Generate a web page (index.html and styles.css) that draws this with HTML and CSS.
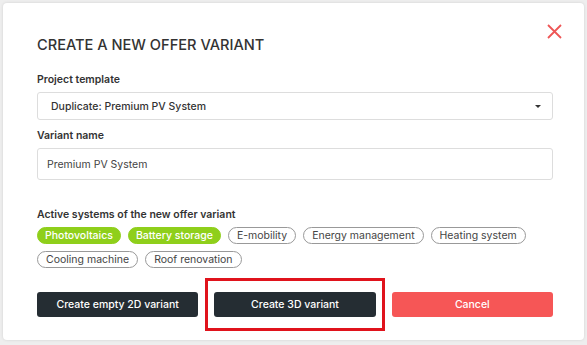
FILE: index.html
```html
<!DOCTYPE html>
<html lang="en">
<head>
    <meta charset="UTF-8">
    <meta name="viewport" content="width=device-width, initial-scale=1.0">
    <title>Create offer variant</title>
    <link rel="stylesheet" href="styles.css">
</head>
<body>
    <div class="modal">
        <button type="button" class="close" aria-label="Close">
            <svg width="15" height="15" viewBox="0 0 15 15">
                <path d="M1 1 L14 14 M14 1 L1 14" stroke="#ee5656" stroke-width="1.8" fill="none"/>
            </svg>
        </button>

        <h2>CREATE A NEW OFFER VARIANT</h2>

        <!-- Template -->
        <label class="field-label">Project template</label>
        <div class="select">
            <span>Duplicate: Premium PV System</span>
            <span class="caret"></span>
        </div>

        <!-- Name -->
        <label class="field-label" for="variantName">Variant name</label>
        <input type="text" id="variantName" class="text-input" value="Premium PV System">

        <!-- Systems -->
        <label class="field-label systems-label">Active systems of the new offer variant</label>
        <div class="chips">
            <span class="chip active">Photovoltaics</span>
            <span class="chip active">Battery storage</span>
            <span class="chip">E-mobility</span>
            <span class="chip">Energy management</span>
            <span class="chip">Heating system</span>
            <span class="chip">Cooling machine</span>
            <span class="chip">Roof renovation</span>
        </div>

        <div class="actions">
            <button type="button" class="btn dark">Create empty 2D variant</button>
            <button type="button" class="btn dark marked">Create 3D variant</button>
            <button type="button" class="btn cancel">Cancel</button>
        </div>
    </div>
</body>
</html>
```

FILE: styles.css
```css
body {
    margin: 0;
    padding: 3px 3px 5px 3px;
    background-color: #eeeeee;
    font-family: Inter, "Noto Sans", sans-serif;
    color: #333;
}
.modal {
    position: relative;
    background: white;
    border-radius: 4px;
    box-shadow: 0 0 3px rgba(0, 0, 0, 0.12);
    padding: 33px 31px 23px 34px;
    height: 337px;
    box-sizing: border-box;
}
.close {
    position: absolute;
    top: 21px;
    right: 22px;
    background: none;
    border: none;
    padding: 0;
    cursor: pointer;
}
h2 {
    margin: 0 0 19px 0;
    font-size: 14.6px;
    font-weight: 500;
    color: #333;
}
.field-label {
    display: block;
    font-size: 10.5px;
    font-weight: 600;
    margin-bottom: 6px;
}
.select {
    display: flex;
    align-items: center;
    justify-content: space-between;
    height: 28px;
    box-sizing: border-box;
    border: 1px solid #ddd;
    border-radius: 3px;
    padding: 0 11px 0 13px;
    font-size: 10.5px;
    font-weight: 500;
    margin-bottom: 9px;
}
.caret {
    width: 0;
    height: 0;
    border-left: 3px solid transparent;
    border-right: 3px solid transparent;
    border-top: 3px solid #333;
}
.text-input {
    display: block;
    width: 100%;
    height: 32px;
    box-sizing: border-box;
    border: 1px solid #ddd;
    border-radius: 3px;
    padding: 0 9px;
    font-family: inherit;
    font-size: 10.5px;
    color: #444;
    margin-bottom: 28px;
}
.systems-label {
    margin-bottom: 6px;
}
.chips {
    display: flex;
    flex-wrap: wrap;
    gap: 7px 7px;
    width: 500px;
}
.chip {
    font-size: 10.5px;
    line-height: 15px;
    padding: 0 8px;
    border: 1px solid #999;
    border-radius: 9px;
    color: #444;
}
.chip.active {
    padding: 0 7px;
    background: #8fcf1b;
    border-color: #8fcf1b;
    color: white;
    font-weight: 500;
}
.actions {
    display: flex;
    gap: 16px;
    margin-top: 24px;
}
.btn {
    flex: 1;
    height: 25px;
    border: none;
    border-radius: 3px;
    font-family: inherit;
    font-size: 10.5px;
    font-weight: 500;
    color: white;
    cursor: pointer;
}
.btn.dark {
    background-color: #252d33;
}
.btn.cancel {
    background-color: #f65656;
}
.marked {
    position: relative;
}
.marked::after {
    content: "";
    position: absolute;
    top: -14px;
    bottom: -14px;
    left: -9px;
    right: -9px;
    border: 3px solid #e0131c;
}
```
